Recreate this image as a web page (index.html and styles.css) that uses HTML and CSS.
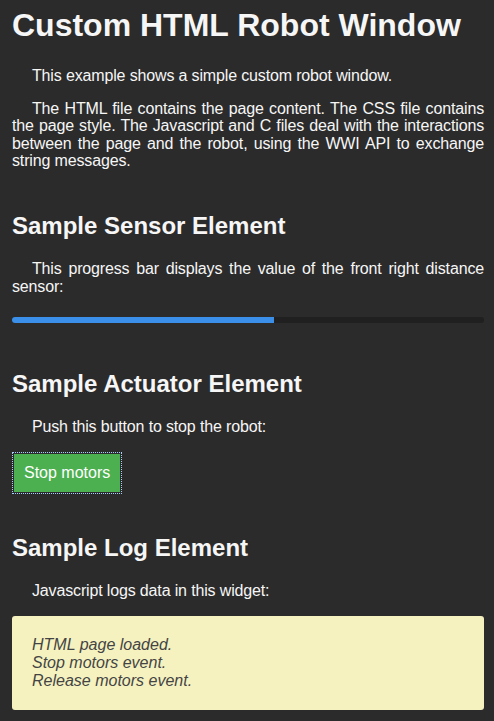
FILE: index.html
```html
<!DOCTYPE html>
<html>
<head>
<meta charset="utf-8">
<link rel="stylesheet" href="styles.css">
</head>
<body>
<h1 class="title">Custom HTML Robot Window</h1>
<p class="text">This example shows a simple custom robot window.</p>
<p class="text">The HTML file contains the page content. The CSS file contains the page style. The Javascript and C files deal with the interactions between the page and the robot, using the WWI API to exchange string messages.</p>

<h2 class="section">Sample Sensor Element</h2>
<p class="text">This progress bar displays the value of the front right distance sensor:</p>
<div class="progress"><div class="progress-fill" style="width:55.5%"></div></div>

<h2 class="section">Sample Actuator Element</h2>
<p class="text">Push this button to stop the robot:</p>
<button class="btn">Stop motors</button>

<h2 class="section">Sample Log Element</h2>
<p class="text">Javascript logs data in this widget:</p>
<div class="log">
<div>HTML page loaded.</div>
<div>Stop motors event.</div>
<div>Release motors event.</div>
</div>
</body>
</html>
```
FILE: styles.css
```css
html { background: #2b2b2b; }
body {
  margin: 0;
  padding: 0 10px 0 12px;
  background: #2b2b2b;
  color: #f6f6f6;
  font-family: "Liberation Sans", Arial, sans-serif;
  font-size: 16px;
}
.title {
  font-size: 32px;
  font-weight: bold;
  margin: 7px 0 24px;
  line-height: 36px;
}
.text {
  text-indent: 20px;
  text-align: justify;
  margin: 0 0 15px;
  line-height: 17.6px;
  letter-spacing: -0.15px;
}
.section {
  font-size: 24px;
  font-weight: bold;
  margin: 42px 0 20px;
  line-height: 28px;
}
.progress {
  height: 6px;
  background: #202020;
  border-radius: 3px;
  overflow: hidden;
  margin: 22px 0 47px;
}
.progress + .section { margin-top: 0; }
.progress-fill {
  height: 100%;
  background: #3b8fe8;
}
.btn {
  display: block;
  margin: 18px 0 0 2px;
  background: #4caf50;
  color: #fff;
  border: none;
  font-family: "Liberation Sans", Arial, sans-serif;
  font-size: 16px;
  padding: 0 10px;
  height: 38px;
  outline: 1px dotted #a8d0ff;
  outline-offset: 1px;
}
.log {
  background: #f5f2c0;
  color: #444;
  font-style: italic;
  border-radius: 3px;
  padding: 20px 20px 20px;
  line-height: 18px;
  margin-top: 17px;
}
```
